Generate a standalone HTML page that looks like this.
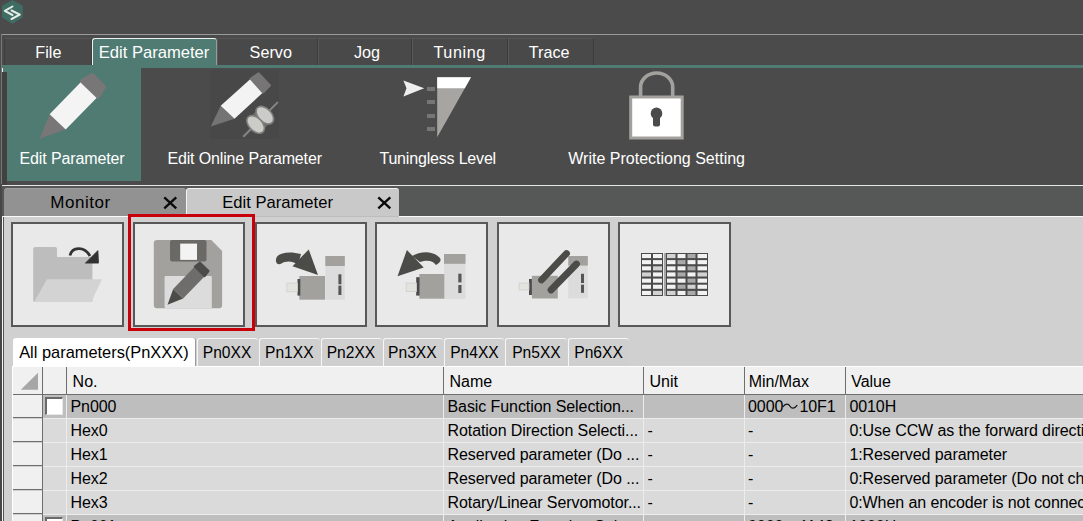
<!DOCTYPE html>
<html><head><meta charset="utf-8">
<style>
*{box-sizing:border-box;margin:0;padding:0}
html,body{width:1083px;height:521px;overflow:hidden;background:#4b4b4b;font-family:"Liberation Sans",sans-serif;position:relative}
.a{position:absolute}
.t{position:absolute;white-space:nowrap;line-height:1}
svg{position:absolute;overflow:visible}
</style></head><body>
<svg style="left:0;top:0" width="30" height="30" viewBox="0 0 30 30">
<polygon points="12.4,0 22.7,5.7 22.7,17.6 12.4,23.8 2,17.6 2,5.7" fill="#3f6d63"/>
<polyline points="12.5,6.5 4.8,10.8 12.5,15" fill="none" stroke="#e6ede7" stroke-width="2" stroke-linejoin="round" stroke-linecap="round"/>
<polyline points="11.5,10.5 19.8,14.6 11.5,19" fill="none" stroke="#e6ede7" stroke-width="2" stroke-linejoin="round" stroke-linecap="round"/>
</svg>
<div class="a" style="left:1px;top:34px;width:1082px;height:1px;background:#9a9a9a"></div>
<div class="a" style="left:1px;top:34px;width:1px;height:150px;background:#787878"></div>
<div class="a" style="left:4px;top:38px;width:88px;height:27px;background:#494949;border-top:1px solid #555555;border-left:1px solid #3e3e3e;border-right:1px solid #3c3c3c"></div>
<div class="t" style="left:35.3px;top:43.89px;font-size:16.2px;color:#fff;">File</div>
<div class="a" style="left:92px;top:38px;width:125px;height:28px;background:#4f7b73;border:1px solid #f2f2f2;border-right-color:#9a9a9a;border-bottom:none;border-radius:3px 3px 0 0"></div>
<div class="t" style="left:98.7px;top:45.05px;font-size:16.6px;color:#fff;">Edit Parameter</div>
<div class="a" style="left:217px;top:38px;width:101px;height:27px;background:#494949;border-top:1px solid #555555;border-left:1px solid #5a5a5a;border-right:1px solid #3c3c3c"></div>
<div class="t" style="left:249.6px;top:43.89px;font-size:16.2px;color:#fff;">Servo</div>
<div class="a" style="left:318px;top:38px;width:94px;height:27px;background:#494949;border-top:1px solid #555555;border-left:1px solid #5a5a5a;border-right:1px solid #3c3c3c"></div>
<div class="t" style="left:354px;top:43.89px;font-size:16.2px;color:#fff;">Jog</div>
<div class="a" style="left:412px;top:38px;width:96px;height:27px;background:#494949;border-top:1px solid #555555;border-left:1px solid #5a5a5a;border-right:1px solid #3c3c3c"></div>
<div class="t" style="left:433.4px;top:43.89px;font-size:16.2px;color:#fff;letter-spacing:0.6px">Tuning</div>
<div class="a" style="left:508px;top:38px;width:86px;height:27px;background:#494949;border-top:1px solid #555555;border-left:1px solid #5a5a5a;border-right:1px solid #3c3c3c"></div>
<div class="t" style="left:528.8px;top:43.89px;font-size:16.2px;color:#fff;">Trace</div>
<div class="a" style="left:2px;top:65px;width:1081px;height:3px;background:#4f7b73"></div>
<div class="a" style="left:2px;top:68px;width:5px;height:4px;background:#4f7b73"></div><div class="a" style="left:2px;top:72px;width:5px;height:113px;background:#414141"></div>
<div class="a" style="left:7px;top:68px;width:134px;height:113px;background:#4f7b73"></div>
<svg style="left:0;top:60px" width="150" height="90" viewBox="0 60 150 90">
<polygon points="39.6,138.8 49.6,114.2 65.7,129.5" fill="#787676"/>
<polygon points="49.6,114.2 81.9,81.1 98,96.5 65.7,129.5" fill="#f3f4f3"/>
<polygon points="81.9,81.1 92,75 104,87 98,96.5" fill="#787676" stroke="#787676" stroke-width="4" stroke-linejoin="round"/>
</svg>
<div class="t" style="left:19.5px;top:150.96px;font-size:16px;color:#fff;letter-spacing:-0.12px">Edit Parameter</div>
<svg style="left:0;top:60px" width="300" height="90" viewBox="0 60 300 90">
<rect x="210" y="70" width="69" height="69" fill="#484848"/>
<polygon points="210.7,126.4 220.7,105.7 234.5,118.8" fill="#747474"/>
<polygon points="220.7,105.7 250.7,78.8 263,92.6 234.5,118.8" fill="#f3f3f3"/>
<polygon points="250.7,78.8 258.5,73.2 270,85.5 263,92.6" fill="#777575" stroke="#777575" stroke-width="2" stroke-linejoin="round"/>
<g transform="translate(260.2,119.8) rotate(-45)">
<line x1="-24" y1="0" x2="25" y2="0" stroke="#858585" stroke-width="2"/>
<rect x="-2.5" y="-9" width="5" height="18" fill="#6c6c6c"/>
<ellipse cx="6.5" cy="0" rx="6.6" ry="10.5" fill="#cbcbc7" stroke="#808080" stroke-width="1.6"/>
<ellipse cx="-6.5" cy="0" rx="6.6" ry="10.5" fill="#cbcbc7" stroke="#808080" stroke-width="1.6"/>
</g>
</svg>
<div class="t" style="left:167.4px;top:150.66px;font-size:16px;color:#fff;letter-spacing:-0.14px">Edit Online Parameter</div>
<svg style="left:0;top:60px" width="500" height="90" viewBox="0 60 500 90">
<polygon points="437.2,77.3 471,77.3 437.2,137.2" fill="#a7a5a2"/>
<polygon points="437.2,77.3 471,77.3 464.8,88.3 437.2,88.3" fill="#ffffff"/>
<polygon points="403.4,80.4 424.2,88.3 403.4,96.5 406.5,88.3" fill="#eeeeee"/>
<rect x="427" y="87" width="8" height="4" fill="#767676"/>
<rect x="427" y="100" width="8" height="4" fill="#767676"/>
<rect x="427" y="114" width="8" height="4" fill="#767676"/>
<rect x="427" y="127" width="8" height="4" fill="#767676"/>
</svg>
<div class="t" style="left:379.4px;top:150.66px;font-size:16px;color:#fff;letter-spacing:-0.18px">Tuningless Level</div>
<svg style="left:0;top:60px" width="700" height="90" viewBox="0 60 700 90">
<path d="M640.6,97 V87 A16,14 0 0 1 672.7,87 V97" fill="none" stroke="#a3a19e" stroke-width="3.6"/>
<rect x="630.7" y="97" width="51.5" height="41" fill="#ffffff" stroke="#a3a19e" stroke-width="3"/>
<circle cx="656.5" cy="113.4" r="5.8" fill="#4b4b4b"/>
<rect x="653" y="113" width="7" height="13.4" rx="2" fill="#4b4b4b"/>
</svg>
<div class="t" style="left:568.3px;top:150.66px;font-size:16px;color:#fff;">Write Protectiong Setting</div>
<div class="a" style="left:2px;top:185px;width:1081px;height:1px;background:#e6e6e6"></div>
<div class="a" style="left:2px;top:186px;width:1081px;height:30px;background:#555856"></div>
<div class="a" style="left:4px;top:188px;width:182px;height:28px;background:#929292;border-radius:3px 3px 0 0;border-top:1px solid #a0a0a0"></div>
<div class="t" style="left:50.2px;top:194.21px;font-size:17px;color:#000;letter-spacing:0.55px">Monitor</div>
<div class="a" style="left:186px;top:188px;width:213px;height:28px;background:#c9c9c9;border-radius:3px 3px 0 0;border-top:1px solid #f0f0f0;border-left:1px solid #f4f4f4"></div>
<div class="t" style="left:222.3px;top:194.95px;font-size:16.6px;color:#000;">Edit Parameter</div>
<svg style="left:0;top:0" width="1" height="1"><path d="M164.25,197.4 L176.25,208.4 M176.25,197.4 L164.25,208.4" stroke="#0a0a0a" stroke-width="2.3"/></svg>
<svg style="left:0;top:0" width="1" height="1"><path d="M378.3,197.4 L390.3,208.4 M390.3,197.4 L378.3,208.4" stroke="#0a0a0a" stroke-width="2.3"/></svg>
<div class="a" style="left:2px;top:216px;width:1081px;height:305px;background:#d0d0d0"></div>
<div class="a" style="left:2px;top:216px;width:185px;height:1px;background:#fafafa"></div>
<div class="a" style="left:399px;top:216px;width:684px;height:1px;background:#fafafa"></div>
<div class="a" style="left:187px;top:216px;width:212px;height:1px;background:#bdbdbd"></div>
<div class="a" style="left:0px;top:186px;width:2px;height:335px;background:#474747"></div>
<div class="a" style="left:2px;top:68px;width:1px;height:4px;background:#f0f0f0"></div>
<div class="a" style="left:2px;top:216px;width:1px;height:305px;background:#f4f4f4"></div>
<div class="a" style="left:3px;top:217px;width:1px;height:304px;background:#555555"></div>
<div class="a" style="left:11px;top:222px;width:113px;height:105px;background:#e9e9e9;border:2px solid #585858"></div>
<div class="a" style="left:133px;top:222px;width:112px;height:105px;background:#e9e9e9;border:2px solid #585858"></div>
<div class="a" style="left:255px;top:222px;width:112px;height:105px;background:#e9e9e9;border:2px solid #585858"></div>
<div class="a" style="left:375px;top:222px;width:113px;height:105px;background:#e9e9e9;border:2px solid #585858"></div>
<div class="a" style="left:497px;top:222px;width:113px;height:105px;background:#e9e9e9;border:2px solid #585858"></div>
<div class="a" style="left:618px;top:222px;width:113px;height:105px;background:#e9e9e9;border:2px solid #585858"></div>
<div class="a" style="left:128px;top:214px;width:127px;height:117px;border:3px solid #c8000a"></div>
<svg style="left:0;top:0" width="1083" height="521" viewBox="0 0 1083 521">
<!-- folder -->
<path d="M33.2,249 Q33.2,247 35.2,247 H55 Q57,247 57,249 V257 H92.4 V301.4 H33.2 Z" fill="#bdbdbd"/>
<polygon points="47,279.2 102,279.2 91.4,301.4 34.3,301.4" fill="#d3d3d3"/>
<path d="M70,255.5 C72,247 84,245.5 90,256" fill="none" stroke="#333" stroke-width="2.8"/>
<polygon points="85.4,263.1 97.9,250.6 98.5,263.1" fill="#333" stroke="#333" stroke-width="0.8" stroke-linejoin="round"/>
<!-- floppy -->
<path d="M157,240 H211.3 L222.1,251 V305 Q222.1,308.3 219,308.3 H157 Q153.8,308.3 153.8,305 V243 Q153.8,240 157,240 Z" fill="#a3a19e"/>
<rect x="170" y="240" width="36.5" height="21.6" rx="2" fill="#6b6966"/>
<rect x="180.2" y="243.6" width="16.8" height="16.3" fill="#f3f3f3"/>
<rect x="164.6" y="276" width="47.2" height="32.3" rx="1" fill="#dcdcdc"/>
<polygon points="167.5,304.7 173.2,288.9 183.1,298.5" fill="#4b4b48"/>
<polygon points="173.2,288.9 194.8,266.6 204.7,276.2 183.1,298.5" fill="#6e6d6b"/>
<polygon points="194.8,266.6 200,262.6 208.6,271 204.7,276.2" fill="#4b4b48" stroke="#4b4b48" stroke-width="2" stroke-linejoin="round"/>
<!-- servo 3 -->
<rect x="325.3" y="256" width="19.5" height="43.7" fill="#dcdcdc"/>
<rect x="325.3" y="256" width="19.5" height="10" fill="#a3a19e"/>
<rect x="338.4" y="274.3" width="3" height="10" fill="#555"/>
<rect x="338.4" y="285.6" width="3" height="9.4" fill="#555"/>
<rect x="299.3" y="276" width="25.7" height="23.7" fill="#a3a19e"/>
<rect x="297.5" y="279" width="2.8" height="16.6" fill="#4b4b4b"/>
<rect x="286.9" y="283" width="10.6" height="8.8" fill="#e3e3e0" stroke="#cfcfcc" stroke-width="0.8"/>
<path d="M276,259.5 C276.5,253 288,250.5 301,254 L298,265 C292,260.5 286,261 281.5,263.5 C278,265.5 275.5,263 276,259.5 Z" fill="#4b4b48"/>
<polygon points="308.7,249.4 318,275 292.5,266.2" fill="#4b4b48"/>
<!-- servo 4 -->
<rect x="444" y="254" width="21.5" height="45" fill="#dcdcdc"/>
<rect x="444" y="254" width="21.5" height="9.8" fill="#a3a19e"/>
<rect x="458.3" y="273.7" width="3.2" height="8.7" fill="#555"/>
<rect x="458.3" y="285" width="3.2" height="8" fill="#555"/>
<rect x="419.3" y="274" width="25" height="24.7" fill="#a3a19e"/>
<rect x="416.2" y="277.2" width="3.4" height="18.4" fill="#4b4b4b"/>
<rect x="406.2" y="283" width="10.3" height="8.6" fill="#e3e3e0" stroke="#cfcfcc" stroke-width="0.8"/>
<path d="M412,256 C420,251.5 432,250 439.5,257.5 C442,260 440,263 436,265 C433,261 428,259.5 420,262 Z" fill="#4b4b48"/>
<polygon points="397.5,276.2 406.9,250 423.7,267.5" fill="#4b4b48"/>
<!-- servo 5 -->
<rect x="568.3" y="256" width="19.5" height="42.3" fill="#dcdcdc"/>
<rect x="568.3" y="256" width="19.5" height="9.6" fill="#a3a19e"/>
<rect x="581" y="273.8" width="3" height="9.2" fill="#555"/>
<rect x="581" y="284.7" width="3" height="8.1" fill="#555"/>
<rect x="531.9" y="275.8" width="25.9" height="22.7" fill="#a3a19e"/>
<rect x="529" y="279" width="2.9" height="16" fill="#4b4b4b"/>
<rect x="519.2" y="283" width="9.8" height="6.9" fill="#e3e3e0" stroke="#cfcfcc" stroke-width="0.8"/>
<line x1="541.5" y1="280" x2="566.5" y2="253.5" stroke="#4b4b48" stroke-width="6.8" stroke-linecap="round"/>
<line x1="551" y1="290" x2="576.5" y2="264" stroke="#4b4b48" stroke-width="6.8" stroke-linecap="round"/>
</svg>
<svg style="left:0;top:0" width="1083" height="521" viewBox="0 0 1083 521">
<rect x="641" y="253" width="22" height="43" fill="#4b4b4b"/>
<rect x="666" y="253" width="42" height="43" fill="#4b4b4b"/>
<rect x="664" y="253" width="2" height="43" fill="#a5a5a5"/>
<rect x="642.0" y="254.0" width="9.0" height="4.1" fill="#f2f2f2"/>
<rect x="653.0" y="254.0" width="9.0" height="4.1" fill="#f2f2f2"/>
<rect x="667.0" y="254.0" width="8.5" height="4.1" fill="#d2d2d2"/>
<rect x="677.5" y="254.0" width="8.0" height="4.1" fill="#f2f2f2"/>
<rect x="687.5" y="254.0" width="8.0" height="4.1" fill="#a9a9a9"/>
<rect x="697.5" y="254.0" width="9.5" height="4.1" fill="#f2f2f2"/>
<rect x="642.0" y="260.1" width="9.0" height="4.1" fill="#f2f2f2"/>
<rect x="653.0" y="260.1" width="9.0" height="4.1" fill="#f2f2f2"/>
<rect x="667.0" y="260.1" width="8.5" height="4.1" fill="#f2f2f2"/>
<rect x="677.5" y="260.1" width="8.0" height="4.1" fill="#a9a9a9"/>
<rect x="687.5" y="260.1" width="8.0" height="4.1" fill="#f2f2f2"/>
<rect x="697.5" y="260.1" width="9.5" height="4.1" fill="#f2f2f2"/>
<rect x="642.0" y="266.3" width="9.0" height="4.1" fill="#f2f2f2"/>
<rect x="653.0" y="266.3" width="9.0" height="4.1" fill="#d2d2d2"/>
<rect x="667.0" y="266.3" width="8.5" height="4.1" fill="#f2f2f2"/>
<rect x="677.5" y="266.3" width="8.0" height="4.1" fill="#f2f2f2"/>
<rect x="687.5" y="266.3" width="8.0" height="4.1" fill="#a9a9a9"/>
<rect x="697.5" y="266.3" width="9.5" height="4.1" fill="#f2f2f2"/>
<rect x="642.0" y="272.4" width="9.0" height="4.1" fill="#d2d2d2"/>
<rect x="653.0" y="272.4" width="9.0" height="4.1" fill="#f2f2f2"/>
<rect x="667.0" y="272.4" width="8.5" height="4.1" fill="#f2f2f2"/>
<rect x="677.5" y="272.4" width="8.0" height="4.1" fill="#a9a9a9"/>
<rect x="687.5" y="272.4" width="8.0" height="4.1" fill="#f2f2f2"/>
<rect x="697.5" y="272.4" width="9.5" height="4.1" fill="#d2d2d2"/>
<rect x="642.0" y="278.6" width="9.0" height="4.1" fill="#f2f2f2"/>
<rect x="653.0" y="278.6" width="9.0" height="4.1" fill="#f2f2f2"/>
<rect x="667.0" y="278.6" width="8.5" height="4.1" fill="#f2f2f2"/>
<rect x="677.5" y="278.6" width="8.0" height="4.1" fill="#f2f2f2"/>
<rect x="687.5" y="278.6" width="8.0" height="4.1" fill="#a9a9a9"/>
<rect x="697.5" y="278.6" width="9.5" height="4.1" fill="#f2f2f2"/>
<rect x="642.0" y="284.7" width="9.0" height="4.1" fill="#f2f2f2"/>
<rect x="653.0" y="284.7" width="9.0" height="4.1" fill="#f2f2f2"/>
<rect x="667.0" y="284.7" width="8.5" height="4.1" fill="#f2f2f2"/>
<rect x="677.5" y="284.7" width="8.0" height="4.1" fill="#a9a9a9"/>
<rect x="687.5" y="284.7" width="8.0" height="4.1" fill="#d2d2d2"/>
<rect x="697.5" y="284.7" width="9.5" height="4.1" fill="#f2f2f2"/>
<rect x="642.0" y="290.9" width="9.0" height="4.1" fill="#f2f2f2"/>
<rect x="653.0" y="290.9" width="9.0" height="4.1" fill="#d2d2d2"/>
<rect x="667.0" y="290.9" width="8.5" height="4.1" fill="#d2d2d2"/>
<rect x="677.5" y="290.9" width="8.0" height="4.1" fill="#f2f2f2"/>
<rect x="687.5" y="290.9" width="8.0" height="4.1" fill="#a9a9a9"/>
<rect x="697.5" y="290.9" width="9.5" height="4.1" fill="#f2f2f2"/>
</svg>
<div class="a" style="left:13px;top:338px;width:183px;height:29px;background:#ffffff;border-radius:3px 3px 0 0;border-right:1px solid #9a9a9a"></div>
<div class="t" style="left:19.2px;top:344.12px;font-size:16.4px;color:#000;">All parameters(PnXXX)</div>
<div class="a" style="left:197px;top:338px;width:61px;height:28px;background:#cfcfcf;border-left:1px solid #f6f6f6;border-top:1px solid #f6f6f6;border-radius:3px 3px 0 0"></div>
<div class="t" style="left:202.8px;top:344.59px;font-size:15.6px;color:#000;">Pn0XX</div>
<div class="a" style="left:259px;top:338px;width:61px;height:28px;background:#cfcfcf;border-left:1px solid #f6f6f6;border-top:1px solid #f6f6f6;border-radius:3px 3px 0 0"></div>
<div class="t" style="left:265px;top:344.59px;font-size:15.6px;color:#000;">Pn1XX</div>
<div class="a" style="left:321px;top:338px;width:61px;height:28px;background:#cfcfcf;border-left:1px solid #f6f6f6;border-top:1px solid #f6f6f6;border-radius:3px 3px 0 0"></div>
<div class="t" style="left:326.7px;top:344.59px;font-size:15.6px;color:#000;">Pn2XX</div>
<div class="a" style="left:383px;top:338px;width:60px;height:28px;background:#cfcfcf;border-left:1px solid #f6f6f6;border-top:1px solid #f6f6f6;border-radius:3px 3px 0 0"></div>
<div class="t" style="left:388.1px;top:344.59px;font-size:15.6px;color:#000;">Pn3XX</div>
<div class="a" style="left:444px;top:338px;width:60px;height:28px;background:#cfcfcf;border-left:1px solid #f6f6f6;border-top:1px solid #f6f6f6;border-radius:3px 3px 0 0"></div>
<div class="t" style="left:450.2px;top:344.59px;font-size:15.6px;color:#000;">Pn4XX</div>
<div class="a" style="left:505px;top:338px;width:62px;height:28px;background:#cfcfcf;border-left:1px solid #f6f6f6;border-top:1px solid #f6f6f6;border-radius:3px 3px 0 0"></div>
<div class="t" style="left:512.2px;top:344.59px;font-size:15.6px;color:#000;">Pn5XX</div>
<div class="a" style="left:568px;top:338px;width:61px;height:28px;background:#cfcfcf;border-left:1px solid #f6f6f6;border-top:1px solid #f6f6f6;border-radius:3px 3px 0 0"></div>
<div class="t" style="left:574.3px;top:344.59px;font-size:15.6px;color:#000;">Pn6XX</div>
<div class="a" style="left:12px;top:366px;width:1071px;height:1px;background:#ffffff"></div>
<div class="a" style="left:12px;top:367px;width:1071px;height:27px;background:#f0f0f0"></div>
<div class="a" style="left:12px;top:394px;width:1071px;height:1px;background:#6e6e6e"></div>
<div class="a" style="left:42px;top:367px;width:1px;height:27px;background:#6e6e6e"></div>
<div class="a" style="left:66px;top:367px;width:1px;height:27px;background:#6e6e6e"></div>
<div class="a" style="left:443px;top:367px;width:1px;height:27px;background:#6e6e6e"></div>
<div class="a" style="left:643px;top:367px;width:1px;height:27px;background:#6e6e6e"></div>
<div class="a" style="left:744px;top:367px;width:1px;height:27px;background:#6e6e6e"></div>
<div class="a" style="left:845px;top:367px;width:1px;height:27px;background:#6e6e6e"></div>
<div class="a" style="left:12px;top:367px;width:1px;height:160px;background:#ffffff"></div>
<svg style="left:0;top:0" width="1" height="1"><polygon points="38,372.8 38,389.8 20.8,389.8" fill="#a6a6a6"/></svg>
<div class="t" style="left:72.6px;top:374.06px;font-size:16px;color:#000;">No.</div>
<div class="t" style="left:449.6px;top:373.86px;font-size:16px;color:#000;letter-spacing:-0.06px">Name</div>
<div class="t" style="left:649.6px;top:373.86px;font-size:16px;color:#000;letter-spacing:-0.06px">Unit</div>
<div class="t" style="left:748.8px;top:373.86px;font-size:16px;color:#000;letter-spacing:-0.06px">Min/Max</div>
<div class="t" style="left:851.3px;top:373.86px;font-size:16px;color:#000;letter-spacing:-0.06px">Value</div>
<div class="a" style="left:13px;top:395px;width:29px;height:23px;background:#f0f0f0"></div>
<div class="a" style="left:13px;top:417px;width:29px;height:1px;background:#6e6e6e"></div>
<div class="a" style="left:42px;top:394px;width:1px;height:24px;background:#6e6e6e"></div>
<div class="a" style="left:43px;top:395px;width:1040px;height:23px;background:#bebebe"></div>
<div class="a" style="left:43px;top:418px;width:1040px;height:1px;background:#ececec"></div>
<div class="a" style="left:66px;top:395px;width:1px;height:23px;background:#ececec"></div>
<div class="a" style="left:443px;top:395px;width:1px;height:23px;background:#ececec"></div>
<div class="a" style="left:643px;top:395px;width:1px;height:23px;background:#ececec"></div>
<div class="a" style="left:744px;top:395px;width:1px;height:23px;background:#ececec"></div>
<div class="a" style="left:845px;top:395px;width:1px;height:23px;background:#ececec"></div>
<div class="a" style="left:45px;top:397px;width:18px;height:18px;background:#fff;border-left:2px solid #6a6a6a;border-top:2px solid #6a6a6a;border-right:1px solid #e8e8e8;border-bottom:1px solid #e8e8e8"></div>
<div class="t" style="left:70.5px;top:398.66px;font-size:16px;color:#000;letter-spacing:-0.08px">Pn000</div>
<div class="t" style="left:447.5px;top:398.66px;font-size:16px;color:#000;letter-spacing:-0.08px">Basic Function Selection...</div>
<div class="t" style="left:748px;top:398.66px;font-size:16px;color:#000;letter-spacing:-0.08px">0000</div>
<div class="t" style="left:799.4px;top:398.66px;font-size:16px;color:#000;letter-spacing:-0.08px">10F1</div>
<svg style="left:0;top:0" width="1" height="1"><path d="M782.8,407.0 C785.5,403.2 788.5,403.6 790,406.2 C791.5,408.8 794.5,409.2 797.2,405.2" fill="none" stroke="#151515" stroke-width="1.25"/></svg>
<div class="t" style="left:849.4px;top:398.66px;font-size:16px;color:#000;letter-spacing:-0.08px">0010H</div>
<div class="a" style="left:13px;top:419px;width:29px;height:23px;background:#f0f0f0"></div>
<div class="a" style="left:13px;top:441px;width:29px;height:1px;background:#6e6e6e"></div>
<div class="a" style="left:42px;top:418px;width:1px;height:24px;background:#6e6e6e"></div>
<div class="a" style="left:43px;top:419px;width:1040px;height:23px;background:#dadada"></div>
<div class="a" style="left:43px;top:442px;width:1040px;height:1px;background:#ececec"></div>
<div class="a" style="left:66px;top:419px;width:1px;height:23px;background:#ececec"></div>
<div class="a" style="left:443px;top:419px;width:1px;height:23px;background:#ececec"></div>
<div class="a" style="left:643px;top:419px;width:1px;height:23px;background:#ececec"></div>
<div class="a" style="left:744px;top:419px;width:1px;height:23px;background:#ececec"></div>
<div class="a" style="left:845px;top:419px;width:1px;height:23px;background:#ececec"></div>
<div class="t" style="left:70.5px;top:422.66px;font-size:16px;color:#000;letter-spacing:-0.08px">Hex0</div>
<div class="t" style="left:447.5px;top:422.66px;font-size:16px;color:#000;letter-spacing:-0.08px">Rotation Direction Selecti...</div>
<div class="t" style="left:647.5px;top:422.66px;font-size:16px;color:#000;letter-spacing:-0.08px">-</div>
<div class="t" style="left:748px;top:422.66px;font-size:16px;color:#000;letter-spacing:-0.08px">-</div>
<div class="t" style="left:849.4px;top:422.66px;font-size:16px;color:#000;letter-spacing:-0.08px">0:Use CCW as the forward direction</div>
<div class="a" style="left:13px;top:443px;width:29px;height:23px;background:#f0f0f0"></div>
<div class="a" style="left:13px;top:465px;width:29px;height:1px;background:#6e6e6e"></div>
<div class="a" style="left:42px;top:442px;width:1px;height:24px;background:#6e6e6e"></div>
<div class="a" style="left:43px;top:443px;width:1040px;height:23px;background:#dadada"></div>
<div class="a" style="left:43px;top:466px;width:1040px;height:1px;background:#ececec"></div>
<div class="a" style="left:66px;top:443px;width:1px;height:23px;background:#ececec"></div>
<div class="a" style="left:443px;top:443px;width:1px;height:23px;background:#ececec"></div>
<div class="a" style="left:643px;top:443px;width:1px;height:23px;background:#ececec"></div>
<div class="a" style="left:744px;top:443px;width:1px;height:23px;background:#ececec"></div>
<div class="a" style="left:845px;top:443px;width:1px;height:23px;background:#ececec"></div>
<div class="t" style="left:70.5px;top:446.66px;font-size:16px;color:#000;letter-spacing:-0.08px">Hex1</div>
<div class="t" style="left:447.5px;top:446.66px;font-size:16px;color:#000;letter-spacing:-0.08px">Reserved parameter (Do ...</div>
<div class="t" style="left:647.5px;top:446.66px;font-size:16px;color:#000;letter-spacing:-0.08px">-</div>
<div class="t" style="left:748px;top:446.66px;font-size:16px;color:#000;letter-spacing:-0.08px">-</div>
<div class="t" style="left:849.4px;top:446.66px;font-size:16px;color:#000;letter-spacing:-0.08px">1:Reserved parameter</div>
<div class="a" style="left:13px;top:467px;width:29px;height:23px;background:#f0f0f0"></div>
<div class="a" style="left:13px;top:489px;width:29px;height:1px;background:#6e6e6e"></div>
<div class="a" style="left:42px;top:466px;width:1px;height:24px;background:#6e6e6e"></div>
<div class="a" style="left:43px;top:467px;width:1040px;height:23px;background:#dadada"></div>
<div class="a" style="left:43px;top:490px;width:1040px;height:1px;background:#ececec"></div>
<div class="a" style="left:66px;top:467px;width:1px;height:23px;background:#ececec"></div>
<div class="a" style="left:443px;top:467px;width:1px;height:23px;background:#ececec"></div>
<div class="a" style="left:643px;top:467px;width:1px;height:23px;background:#ececec"></div>
<div class="a" style="left:744px;top:467px;width:1px;height:23px;background:#ececec"></div>
<div class="a" style="left:845px;top:467px;width:1px;height:23px;background:#ececec"></div>
<div class="t" style="left:70.5px;top:470.66px;font-size:16px;color:#000;letter-spacing:-0.08px">Hex2</div>
<div class="t" style="left:447.5px;top:470.66px;font-size:16px;color:#000;letter-spacing:-0.08px">Reserved parameter (Do ...</div>
<div class="t" style="left:647.5px;top:470.66px;font-size:16px;color:#000;letter-spacing:-0.08px">-</div>
<div class="t" style="left:748px;top:470.66px;font-size:16px;color:#000;letter-spacing:-0.08px">-</div>
<div class="t" style="left:849.4px;top:470.66px;font-size:16px;color:#000;letter-spacing:-0.08px">0:Reserved parameter (Do not change.)</div>
<div class="a" style="left:13px;top:491px;width:29px;height:23px;background:#f0f0f0"></div>
<div class="a" style="left:13px;top:513px;width:29px;height:1px;background:#6e6e6e"></div>
<div class="a" style="left:42px;top:490px;width:1px;height:24px;background:#6e6e6e"></div>
<div class="a" style="left:43px;top:491px;width:1040px;height:23px;background:#dadada"></div>
<div class="a" style="left:43px;top:514px;width:1040px;height:1px;background:#ececec"></div>
<div class="a" style="left:66px;top:491px;width:1px;height:23px;background:#ececec"></div>
<div class="a" style="left:443px;top:491px;width:1px;height:23px;background:#ececec"></div>
<div class="a" style="left:643px;top:491px;width:1px;height:23px;background:#ececec"></div>
<div class="a" style="left:744px;top:491px;width:1px;height:23px;background:#ececec"></div>
<div class="a" style="left:845px;top:491px;width:1px;height:23px;background:#ececec"></div>
<div class="t" style="left:70.5px;top:494.66px;font-size:16px;color:#000;letter-spacing:-0.08px">Hex3</div>
<div class="t" style="left:447.5px;top:494.66px;font-size:16px;color:#000;letter-spacing:-0.08px">Rotary/Linear Servomotor...</div>
<div class="t" style="left:647.5px;top:494.66px;font-size:16px;color:#000;letter-spacing:-0.08px">-</div>
<div class="t" style="left:748px;top:494.66px;font-size:16px;color:#000;letter-spacing:-0.08px">-</div>
<div class="t" style="left:849.4px;top:494.66px;font-size:16px;color:#000;letter-spacing:-0.08px">0:When an encoder is not connected</div>
<div class="a" style="left:13px;top:515px;width:29px;height:23px;background:#f0f0f0"></div>
<div class="a" style="left:13px;top:537px;width:29px;height:1px;background:#6e6e6e"></div>
<div class="a" style="left:42px;top:514px;width:1px;height:24px;background:#6e6e6e"></div>
<div class="a" style="left:43px;top:515px;width:1040px;height:23px;background:#bebebe"></div>
<div class="a" style="left:43px;top:538px;width:1040px;height:1px;background:#ececec"></div>
<div class="a" style="left:66px;top:515px;width:1px;height:23px;background:#ececec"></div>
<div class="a" style="left:443px;top:515px;width:1px;height:23px;background:#ececec"></div>
<div class="a" style="left:643px;top:515px;width:1px;height:23px;background:#ececec"></div>
<div class="a" style="left:744px;top:515px;width:1px;height:23px;background:#ececec"></div>
<div class="a" style="left:845px;top:515px;width:1px;height:23px;background:#ececec"></div>
<div class="a" style="left:45px;top:517px;width:18px;height:18px;background:#fff;border-left:2px solid #6a6a6a;border-top:2px solid #6a6a6a;border-right:1px solid #e8e8e8;border-bottom:1px solid #e8e8e8"></div>
<div class="t" style="left:70.5px;top:518.66px;font-size:16px;color:#000;letter-spacing:-0.08px">Pn001</div>
<div class="t" style="left:447.5px;top:518.66px;font-size:16px;color:#000;letter-spacing:-0.08px">Application Function Sele...</div>
<div class="t" style="left:748px;top:518.66px;font-size:16px;color:#000;letter-spacing:-0.08px">0000</div>
<div class="t" style="left:799.4px;top:518.66px;font-size:16px;color:#000;letter-spacing:-0.08px">1142</div>
<svg style="left:0;top:0" width="1" height="1"><path d="M782.8,527.0 C785.5,523.2 788.5,523.6 790,526.2 C791.5,528.8 794.5,529.2 797.2,525.2" fill="none" stroke="#151515" stroke-width="1.25"/></svg>
<div class="t" style="left:849.4px;top:518.66px;font-size:16px;color:#000;letter-spacing:-0.08px">1000H</div>
</body></html>
